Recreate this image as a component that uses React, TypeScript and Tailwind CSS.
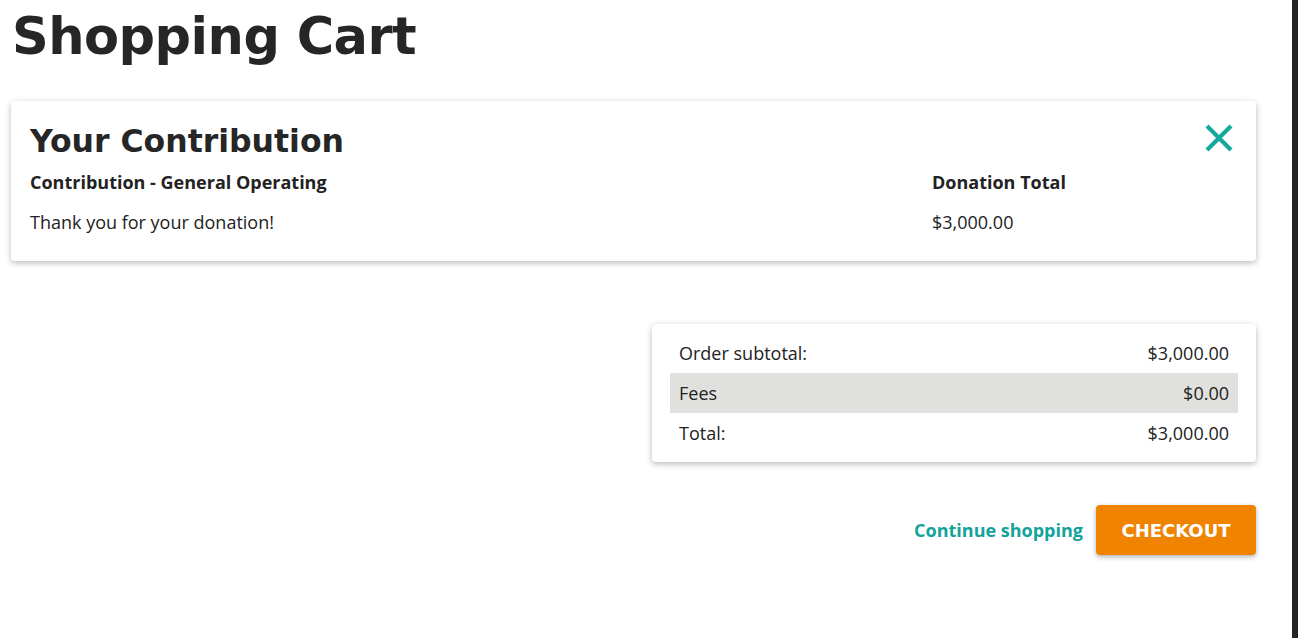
import React from "react";

const heading = { fontFamily: '"DejaVu Sans", Montserrat, sans-serif' };

function SummaryRow({ label, value, shaded }: { label: string; value: string; shaded?: boolean }) {
  return (
    <div className={`flex h-[40px] items-center justify-between px-[9px] ${shaded ? "bg-[#e0e0de]" : ""}`}>
      <span>{label}</span>
      <span>{value}</span>
    </div>
  );
}

export default function App() {
  return (
    <div className="flex h-[638px] w-full bg-white text-[#222] font-['Open_Sans',sans-serif]">
      <main className="flex-1 pl-[11px] pr-[36px]">
        <h1 style={heading} className="pl-[1px] pt-[5px] text-[51px] font-bold leading-[64px] tracking-[-0.5px] text-[#262626]">
          Shopping Cart
        </h1>

        {/* cart item */}
        <section className="mt-[32px] rounded-[4px] bg-white px-[19px] pb-[25px] pt-[18px] shadow-[0_2px_6px_rgba(0,0,0,0.28)]">
          <div className="flex items-start justify-between">
            <h2 style={heading} className="text-[31.5px] font-bold leading-[44px] text-[#262626]">
              Your Contribution
            </h2>
            <button className="mr-[3px] mt-[4px] text-[#14a89e]" aria-label="Remove">
              <svg width="30" height="30" viewBox="0 0 30 30">
                <path d="M3 3 L27 27 M27 3 L3 27" stroke="currentColor" strokeWidth="4.2" />
              </svg>
            </button>
          </div>
          <div className="mt-[5px] grid grid-cols-[902px_1fr] text-[18px]">
            <div className="font-bold leading-[28px]">Contribution - General Operating</div>
            <div className="font-bold leading-[28px]">Donation Total</div>
            <div className="mt-[12px] leading-[28px]">Thank you for your donation!</div>
            <div className="mt-[12px] leading-[28px]">$3,000.00</div>
          </div>
        </section>

        {/* totals */}
        <div className="mt-[63px] flex justify-end">
          <div className="w-[604px] rounded-[4px] bg-white px-[18px] py-[9px] text-[18px] shadow-[0_2px_6px_rgba(0,0,0,0.28)]">
            <SummaryRow label="Order subtotal:" value="$3,000.00" />
            <SummaryRow label="Fees" value="$0.00" shaded />
            <SummaryRow label="Total:" value="$3,000.00" />
          </div>
        </div>

        <div className="mt-[43px] flex items-center justify-end gap-[13px]">
          <a href="#" className="text-[18px] font-bold text-[#14a39a]">
            Continue shopping
          </a>
          <button
            style={heading}
            className="h-[50px] w-[160px] rounded-[4px] bg-[#f08300] text-[18px] font-bold text-white shadow-[0_2px_5px_rgba(0,0,0,0.3)]"
          >
            CHECKOUT
          </button>
        </div>
      </main>
      <div className="w-[6px] bg-[#252525]" />
    </div>
  );
}
